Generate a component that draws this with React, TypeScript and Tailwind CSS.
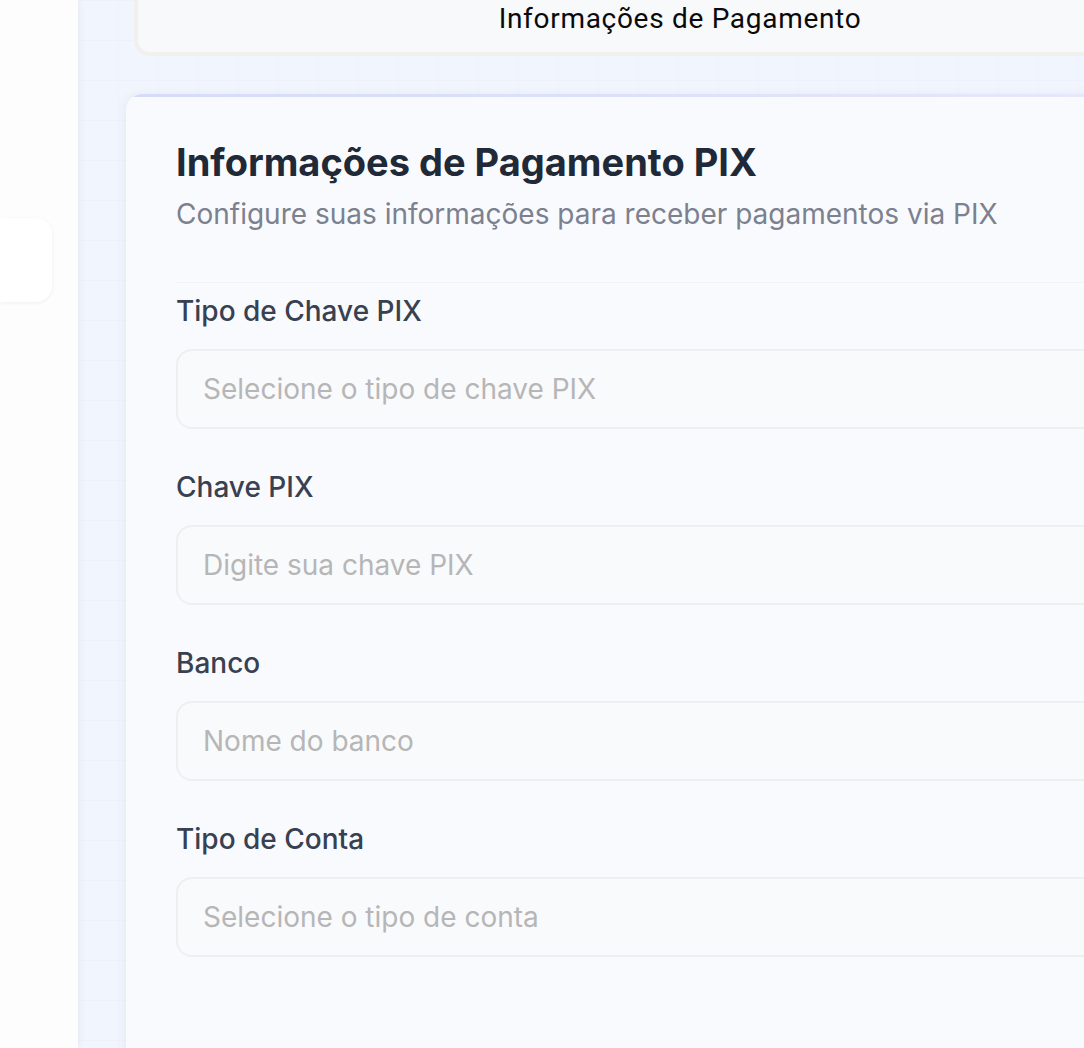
import React from 'react';

const fields = [
  { label: 'Tipo de Chave PIX', placeholder: 'Selecione o tipo de chave PIX' },
  { label: 'Chave PIX', placeholder: 'Digite sua chave PIX' },
  { label: 'Banco', placeholder: 'Nome do banco' },
  { label: 'Tipo de Conta', placeholder: 'Selecione o tipo de conta' },
];

const App: React.FC = () => {
  return (
    <div className="flex h-[1048px] w-[1084px] overflow-hidden font-['Inter',sans-serif]">
      {/* Sidebar */}
      <aside className="relative z-10 w-[78px] shrink-0 bg-[#fdfdfd] shadow-[2px_0_8px_rgba(30,41,59,0.04)]">
        <div className="mt-[218px] h-[84px] w-[52px] rounded-r-2xl bg-white shadow-[0_1px_4px_rgba(15,23,42,0.06)]"></div>
      </aside>

      {/* Main area */}
      <main className="flex-1 bg-[#f1f5fd] bg-[linear-gradient(rgba(148,163,220,0.035)_1px,transparent_1px),linear-gradient(90deg,rgba(148,163,220,0.035)_1px,transparent_1px)] bg-[size:40px_40px] pl-[48px]">
        {/* Top header card */}
        <div className="-mt-[40px] ml-[8px] flex h-[96px] w-[1092px] items-end justify-center rounded-2xl border-4 border-[#f1f0ec] bg-[#f8f9fa] pb-[19px]">
          <span className="font-['Roboto',sans-serif] text-[28px] leading-none tracking-[0.025em] text-[#0a0a0a]">
            Informações de Pagamento
          </span>
        </div>

        {/* PIX card */}
        <section className="mt-[38px] w-[1100px] overflow-hidden rounded-tl-2xl bg-[#f9fafd] shadow-[-2px_0_10px_rgba(30,41,59,0.05)]">
          <div className="h-[3px] bg-gradient-to-r from-[#d6dcf8] via-[#dde2fa] to-[#ebe8fb]"></div>
          <div className="px-[50px] pt-[45px]">
            <div className="border-b border-[#f1f3f6] pb-[52px]">
              <h1 className="text-[38px] font-bold leading-[40px] text-[#1f2937]">
                Informações de Pagamento PIX
              </h1>
              <p className="mt-4 text-[28px] leading-[32px] text-[#7b818f]">
                Configure suas informações para receber pagamentos via PIX
              </p>
            </div>

            <div className="flex flex-col gap-[42px] pt-3 pb-[120px]">
              {fields.map((f) => (
                <div key={f.label} className="flex flex-col">
                  <label className="text-[28px] font-medium leading-[32px] text-[#374151]">{f.label}</label>
                  <div className="mt-[22px] flex h-[80px] items-center rounded-2xl border-2 border-[#eeeff1] bg-[#f9fafc] px-[25px]">
                    <span className="text-[28px] text-[#b6b6b6]">{f.placeholder}</span>
                  </div>
                </div>
              ))}
            </div>
          </div>
        </section>
      </main>
    </div>
  );
};

export default App;
